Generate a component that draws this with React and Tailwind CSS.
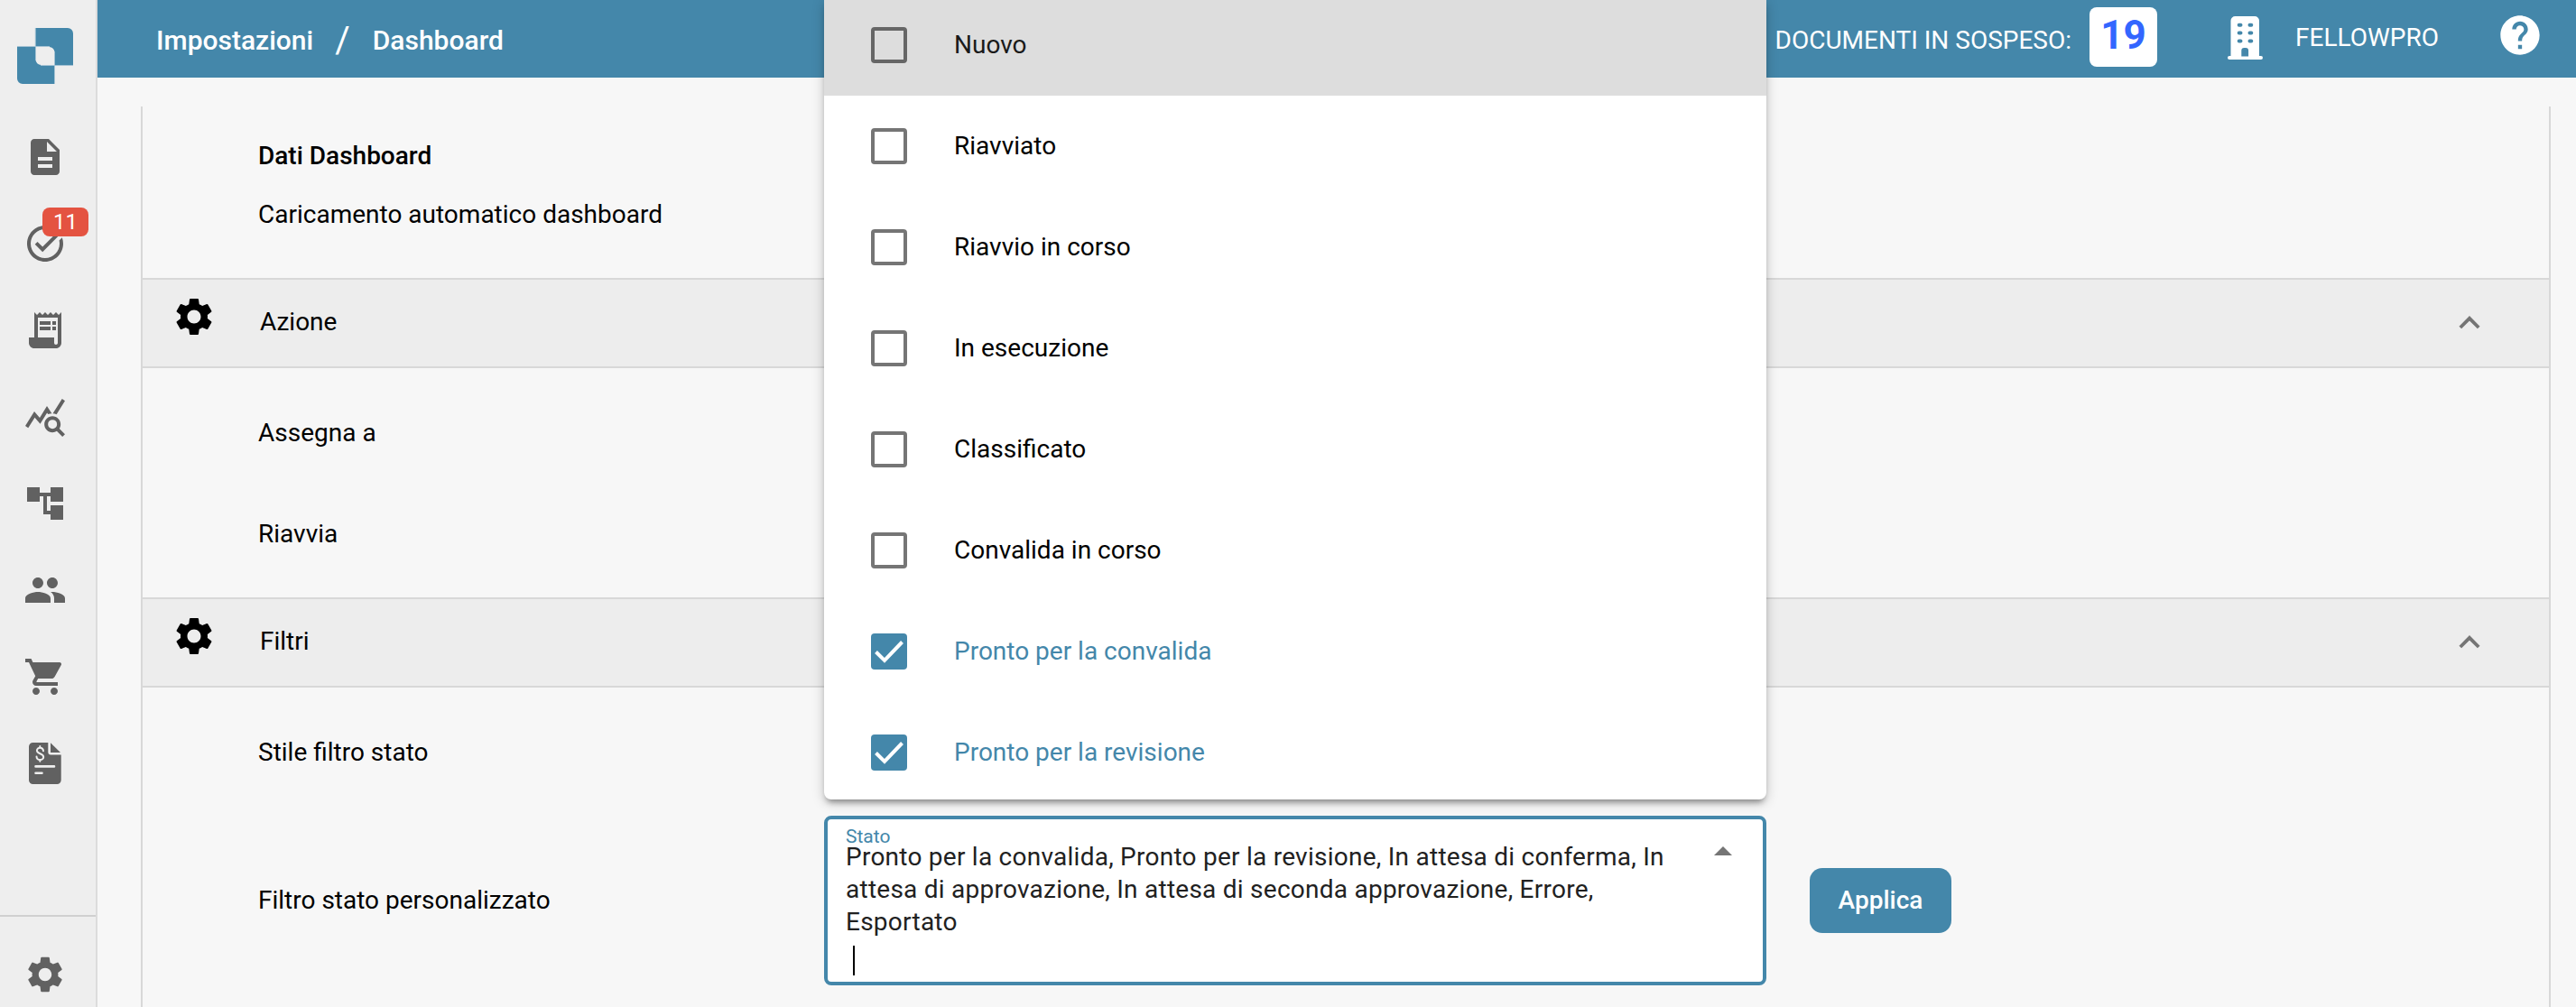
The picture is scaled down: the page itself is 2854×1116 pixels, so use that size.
import { MdDescription, MdTaskAlt, MdReceiptLong, MdQueryStats, MdAccountTree, MdPeople, MdShoppingCart, MdSettings, MdHelp } from "react-icons/md";

const OPTIONS = [
  ["Nuovo", false],
  ["Riavviato", false],
  ["Riavvio in corso", false],
  ["In esecuzione", false],
  ["Classificato", false],
  ["Convalida in corso", false],
  ["Pronto per la convalida", true],
  ["Pronto per la revisione", true],
];

function Logo() {
  return (
    <svg viewBox="0 0 62 62" className="size-[62px] shrink-0">
      <path fill="#4487aa" d="M20 0H56a6 6 0 0 1 6 6V41H41.500V27a6 6 0 0 0-6-6H20Z" />
      <path fill="#4487aa" d="M0 21H20.500V35a6 6 0 0 0 6 6H41.500V62H6a6 6 0 0 1-6-6Z" />
      <path fill="none" stroke="#a5c3d4" d="M20.300 0V21M0 20.500H36M41.500 26V62M26 41.500H62M20.500 21V36" />
    </svg>
  );
}

function InvoiceIcon() {
  return (
    <svg viewBox="0 0 36 46" className="mt-px h-[46px] w-9 shrink-0">
      <path fill="#616161" d="M4.500 0H21.300V10.500a3 3 0 0 0 3 3H35.700V41.500a4.500 4.500 0 0 1-4.500 4.500H4.500A4.500 4.500 0 0 1 0 41.500V4.500A4.500 4.500 0 0 1 4.500 0ZM24 0.300L35 11H24Z" />
      <path fill="none" stroke="#eee" strokeWidth="2.600" strokeLinecap="round" d="M7.500 26.400H28M7.500 33.700H14.500" />
      <path fill="none" stroke="#eee" strokeWidth="2" strokeLinecap="round" d="M12.300 4V5.500M12.300 19V20.800M16 9.300C15.700 4.400 8.900 4.600 8.900 8.800C8.900 12.900 16.200 11.600 16.200 15.900C16.200 20.200 8.700 20.100 8.500 15.500" />
    </svg>
  );
}

function Building() {
  return (
    <svg viewBox="0 0 39 48" className="h-12 w-[39px]">
      <path fill="#fff" fillRule="evenodd" d="M8.500 0H30a5 5 0 0 1 5 5V44h2a2 2 0 0 1 0 4H2a2 2 0 0 1 0-4H3.500V5a5 5 0 0 1 5-5ZM15.300 44.500h7.800V38a3 3 0 0 0-3-3h-1.800a3 3 0 0 0-3 3Z" />
      <path stroke="#4487aa" strokeWidth="4" strokeLinecap="round" d="M12.700 9.800h1.800M24.500 9.800h1.800M12.700 18.600h1.800M24.500 18.600h1.800M12.700 27.400h1.800M24.500 27.400h1.800" />
    </svg>
  );
}

function SectionHeader({ title }) {
  return (
    <div className="flex h-[100px] items-center border-y-2 border-[#d8d8d8] bg-[#ededed] pb-0.5 pl-8 pr-[76px]">
      <MdSettings className="mb-3 size-[50px] shrink-0 text-black" />
      <span className="ml-12 grow">{title}</span>
      <svg viewBox="0 0 24 15" className="h-[15px] w-6">
        <path d="M1.800 13L12 2.800L22.200 13" fill="none" stroke="#757575" strokeWidth="3.800" />
      </svg>
    </div>
  );
}

export default function App() {
  return (
    <div className="relative flex h-[1116px] w-[2854px] overflow-hidden bg-[#f7f7f7] font-['Roboto',sans-serif] text-[28px] leading-9 text-black">
      <aside className="flex w-[108px] shrink-0 flex-col border-r-2 border-[#dcdcdc] bg-[#eee] text-[#616161]">
        <div className="pl-[19px] pt-[31px]"><Logo /></div>
        <nav className="mt-[57px] flex w-[100px] flex-col items-center gap-12">
          <MdDescription className="size-12" />
          <div className="relative">
            <MdTaskAlt className="size-12" />
            <span className="absolute -top-[16px] left-[21px] flex h-8 w-[51px] items-center justify-center rounded-lg bg-[#e45341] text-2xl text-white">11</span>
          </div>
          <MdReceiptLong className="size-12" />
          <MdQueryStats className="size-12" />
          <MdAccountTree className="size-12" />
          <MdPeople className="size-12" />
          <MdShoppingCart className="size-12" />
          <InvoiceIcon />
        </nav>
        <div className="mt-auto flex h-[102px] items-center border-t-2 border-[#d0d0d0] pl-[26px] pt-7">
          <MdSettings className="size-12 shrink-0" />
        </div>
      </aside>

      <div className="flex grow flex-col">
        <header className="flex h-[86px] shrink-0 items-center bg-[#4487aa] pl-[65px] text-white">
          <div className="flex items-center pt-1">
            <span className="text-[30px] font-medium">Impostazioni</span>
            <span className="ml-[24px] mr-[25px] text-[40px]">/</span>
            <span className="text-[30px] font-medium">Dashboard</span>
          </div>
          <span className="ml-auto pt-1">DOCUMENTI IN SOSPESO:</span>
          <span className="mb-1 ml-[20px] flex h-[66px] w-[75px] items-center justify-center rounded-lg bg-white pb-1 text-[44px] font-bold text-[#3366ff]">19</span>
          <span className="mb-0.5 ml-[78px] flex"><Building /></span>
          <span className="mb-0.5 ml-[36px]">FELLOWPRO</span>
          <MdHelp className="mb-[9px] ml-[64px] mr-[36px] size-[52px]" />
        </header>

        <main className="ml-12 mr-7 mt-8 flex grow flex-col border-x-2 border-[#d8d8d8]">
          <div className="flex h-[190px] flex-col gap-[29px] pl-[128px] pt-[37px]">
            <div className="font-medium">Dati Dashboard</div>
            <div>Caricamento automatico dashboard</div>
          </div>
          <SectionHeader title="Azione" />
          <div className="flex h-[254px] flex-col gap-[76px] pl-[128px] pt-[54px]">
            <div>Assegna a</div>
            <div>Riavvia</div>
          </div>
          <SectionHeader title="Filtri" />
          <div className="flex flex-col pl-[128px] pt-[54px]">
            <div>Stile filtro stato</div>
            <div className="mt-[52px] flex items-center">
              <div className="w-[627px]">Filtro stato personalizzato</div>
              <div className="flex h-[188px] w-[1044px] rounded-lg border-4 border-[#4487aa] bg-white pl-5 text-[#212121]">
                <div className="w-[930px] pt-[7px]">
                  <div className="text-[21px] leading-6 text-[#4487aa]">Stato</div>
                  <p className="-mt-[7px] tracking-[0.25px]">Pronto per la convalida, Pronto per la revisione, In attesa di conferma, In attesa di approvazione, In attesa di seconda approvazione, Errore, Esportato</p>
                  <div className="ml-2 mt-2 h-[33px] w-[2px] bg-black" />
                </div>
                <svg viewBox="0 0 20 10" className="ml-[32px] mt-[30px] h-[10px] w-5"><path d="M0 10L10 0L20 10Z" fill="#757575" /></svg>
              </div>
              <button className="ml-12 h-[72px] w-[157px] rounded-[14px] bg-[#4487aa] font-medium text-white">Applica</button>
            </div>
          </div>
        </main>
      </div>

      <div className="absolute left-[913px] top-0 flex h-[886px] w-[1044px] flex-col overflow-hidden rounded-b-lg bg-white shadow-[0_6px_6px_-3px_rgba(0,0,0,.35),0_3px_14px_rgba(0,0,0,.22)]">
        {OPTIONS.map(([label, checked], i) => (
          <div key={label} className={i === 0 ? "flex h-[106px] shrink-0 items-center bg-[#ddd] pb-1.5 pl-[52px] text-[#1a1a1a]" : "flex h-28 shrink-0 items-center pl-[52px]"}>
            {checked ? (
              <span className="flex size-10 items-center justify-center rounded bg-[#4487aa]">
                <svg viewBox="0 0 32 27" className="h-[27px] w-8"><path d="M1.500 13.500L11 23L30.500 2.500" fill="none" stroke="#fff" strokeWidth="4" /></svg>
              </span>
            ) : (
              <span className={i === 0 ? "size-10 rounded border-4 border-[#666]" : "size-10 rounded border-4 border-[#757575]"} />
            )}
            <span className={checked ? "ml-[52px] text-[#4487aa]" : "ml-[52px]"}>{label}</span>
          </div>
        ))}
      </div>
    </div>
  );
}
